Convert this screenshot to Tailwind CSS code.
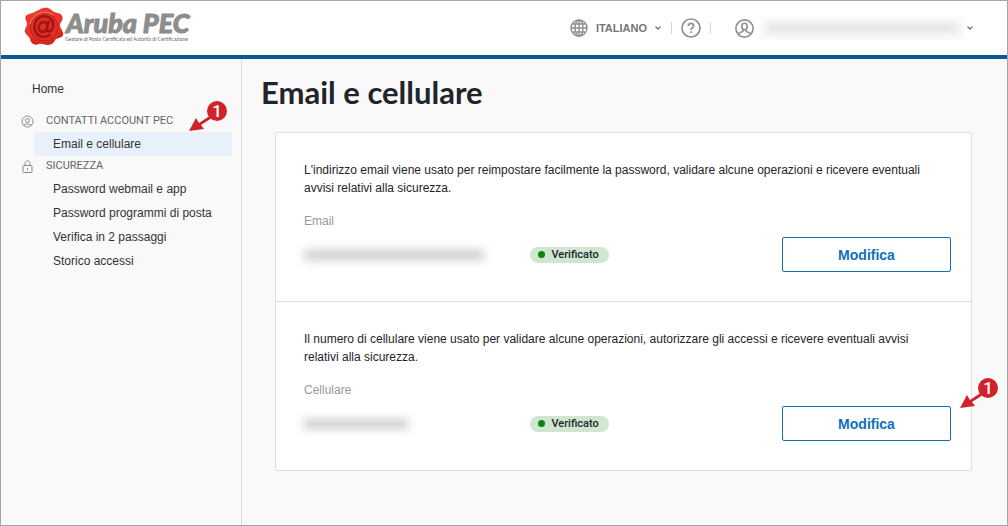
<!DOCTYPE html>
<html lang="it">

<head>
  <meta charset="UTF-8" />
  <meta name="viewport" content="width=device-width, initial-scale=1.0" />
  <title>Email e cellulare - Aruba PEC</title>
  <script src="https://cdn.jsdelivr.net/npm/@tailwindcss/browser@4"></script>
</head>

<body class="flex min-h-screen flex-col border border-[#a6a6a6] bg-[#f9f9f9] font-['Liberation_Sans',Arial,sans-serif] text-[12px] text-[#212529]">

  <!-- Intestazione -->
  <header class="flex h-[58px] shrink-0 items-center justify-between border-b-4 border-[#075a98] bg-white pr-[34px] pl-[22px]">
    <a href="#" aria-label="Aruba PEC" class="block">
      <svg width="200" height="42" viewBox="0 0 200 42" role="img" aria-label="Aruba PEC">
        <defs>
          <radialGradient id="wax" cx="45%" cy="38%" r="65%">
            <stop offset="0" stop-color="#f4493a" />
            <stop offset="0.7" stop-color="#e9352b" />
            <stop offset="1" stop-color="#cb1f18" />
          </radialGradient>
        </defs>
        <path d="M13 4C16 4 17 1 21 1C26 0 28 3 31 5C34 6 38 6 39 9C41 13 37 15 37 18C37 22 41 24 40 28C39 31 35 31 33 32C31 35 29 38 25 38C22 38 19 36 16 37C11 39 8 36 7 32C6 29 3 28 2 25C1 22 4 20 4 17C4 14 1 12 3 9C5 6 10 7 13 4Z" fill="url(#wax)" />
        <circle cx="21" cy="20" r="14" fill="#df2e26" stroke="#bd1e18" />
        <path d="M7 17A15 15 0 0 1 30 8" fill="none" stroke="#fa8578" />
        <g fill="none" stroke="#a01512" stroke-width="2.500" stroke-linecap="round">
          <ellipse cx="20" cy="20" rx="4.200" ry="5" transform="rotate(18 20 20)" />
          <path d="M25.500 14.500L24 22C23.700 25 27 25.500 29 22.500C31 19 30.500 14.500 28 12C24 8 17.500 8.500 14 12.500C10.500 16.500 10.500 23 14 27C17.500 30.500 22.500 30.500 26.500 28" />
        </g>
        <text x="43" y="26" font-family="Lato, sans-serif" font-size="27" font-weight="900" font-style="italic" fill="#8d8d8d" stroke="#8d8d8d" stroke-width="1">Aruba PEC</text>
        <text x="42" y="34" font-family="Lato, sans-serif" font-size="5" fill="#666666">Gestore di Posta Certificata ed Autorità di Certificazione</text>
      </svg>
    </a>

    <div class="flex items-center text-[#757575]">
      <button type="button" class="flex items-center gap-2 text-[11px] font-bold">
        <svg width="18" height="18" viewBox="0 0 18 18" fill="none" stroke="#8f8f8f" stroke-width="1.400">
          <circle cx="9" cy="9" r="8" />
          <ellipse cx="9" cy="9" rx="4" ry="8" />
          <path d="M9 1v16M1 9h16M2.500 5h13M2.500 13h13" />
        </svg>
        ITALIANO
        <svg width="6" height="4" viewBox="0 0 6 4" fill="none" stroke="#757575" stroke-width="1.300"><path d="M0.500 0.500L3 3L5.500 0.500" /></svg>
      </button>
      <span class="ml-2.5 h-3 w-px bg-[#d4d4d4]"></span>
      <button type="button" aria-label="Aiuto" class="mx-[9px]">
        <svg class="block" width="20" height="20" viewBox="0 0 20 20" fill="none" stroke="#8f8f8f" stroke-width="1.700">
          <circle cx="10" cy="10" r="9" />
          <path d="M7.300 8C7.300 4.500 12.700 4.600 12.700 7.800C12.700 9.800 10 9.800 10 12" />
          <path d="M10 13.300v1.700" />
        </svg>
      </button>
      <span class="h-3 w-px bg-[#d4d4d4]"></span>
      <button type="button" aria-label="Account" class="ml-6 flex items-center">
        <svg width="19" height="19" viewBox="0 0 19 19" fill="none" stroke="#8f8f8f" stroke-width="1.600">
          <circle cx="9.500" cy="9.500" r="8.600" />
          <ellipse cx="9.500" cy="7.500" rx="2.700" ry="3.200" />
          <path d="M3.500 15C5 12.500 7.500 13.500 8 12V10.500M11 10.500V12C11.500 13.500 14 12.500 15.500 15" />
        </svg>
        <span class="mr-[3px] ml-1.5 flex h-[23px] w-[204px] items-center bg-[#fbfbfb] px-1.5">
          <span class="h-2 w-full bg-[#dedede] blur-[4px]"></span>
        </span>
        <svg width="6" height="4" viewBox="0 0 6 4" fill="none" stroke="#757575" stroke-width="1.300"><path d="M0.500 0.500L3 3L5.500 0.500" /></svg>
      </button>
    </div>
  </header>

  <div class="flex flex-1">
    <!-- Menu -->
    <nav class="w-[241px] shrink-0 border-r border-[#dedede] pt-5 pr-[9px] pl-[20px] text-[#333333]">
      <a href="#" class="mb-[11px] block pl-[11px] leading-[21px]">Home</a>

      <h2 class="flex h-[21px] items-center gap-3 font-['Roboto',sans-serif] text-[11px] text-[#666666]">
        <svg width="13" height="13" viewBox="0 0 13 13" fill="none" stroke="#8a8a8a">
          <circle cx="6.500" cy="6.500" r="5.500" />
          <circle cx="6.500" cy="5.500" r="2" />
          <path d="M2.500 10.500C3.500 8.500 9.500 8.500 10.500 10.500" />
        </svg>
        CONTATTI ACCOUNT PEC
      </h2>
      <ul class="pl-[13px] leading-6">
        <li class="relative">
          <a href="#" class="block rounded-xs bg-[#e8f1f9] pl-[19px]">Email e cellulare</a>
          <svg class="absolute right-1 bottom-6" width="40" height="32" viewBox="0 0 40 32" fill="#d0222a">
            <path d="M1 31L8 18L11 23L26 13L27 16L13 25L16 29Z" />
            <circle cx="29" cy="11" r="10" />
            <text x="29" y="17" text-anchor="middle" font-family="Roboto, sans-serif" font-size="17" font-weight="500" fill="#ffffff">1</text>
          </svg>
        </li>
      </ul>

      <h2 class="flex h-[21px] items-center gap-3 font-['Roboto',sans-serif] text-[11px] text-[#666666]">
        <svg width="13" height="13" viewBox="0 0 13 13" fill="none" stroke="#8a8a8a">
          <rect x="2" y="5.500" width="9" height="7" rx="1" />
          <path d="M4 5.500V3.500C4 0 9 0 9 3.500V5.500M6.500 8v2.500" />
        </svg>
        SICUREZZA
      </h2>
      <ul class="pl-[32px] leading-6">
        <li><a href="#">Password webmail e app</a></li>
        <li><a href="#">Password programmi di posta</a></li>
        <li><a href="#">Verifica in 2 passaggi</a></li>
        <li><a href="#">Storico accessi</a></li>
      </ul>
    </nav>

    <!-- Contenuto -->
    <main class="min-w-0 flex-1 pt-3 pr-[35px] pl-[19px]">
      <h1 class="font-['Lato',sans-serif] text-[31px] leading-[42px] font-bold">Email e cellulare</h1>

      <div class="mt-[19px] ml-3.5 divide-y divide-[#dedede] rounded-xs border border-[#dedede] bg-white leading-[18px]">
        <section class="pt-7 pr-5 pb-[29px] pl-7">
          <p class="pr-4">L'indirizzo email viene usato per reimpostare facilmente la password, validare alcune operazioni e ricevere eventuali avvisi relativi alla sicurezza.</p>
          <h2 class="mt-[15px] mb-[7px] text-[#999999]">Email</h2>
          <div class="grid grid-cols-[35%_1fr_169px] items-center">
            <span class="h-2.5 w-[180px] bg-[#cccccc] blur-[5px]"></span>
            <span class="flex h-4 items-center gap-1.5 justify-self-start rounded-full bg-[#cfe7d0] pr-2.5 pl-2 text-[11px]"><i class="size-[7px] rounded-full bg-[#0b8413]"></i><b class="font-['Roboto',sans-serif] font-medium">Verificato</b></span>
            <button type="button" class="h-[35px] rounded-xs border border-[#1170bb] text-[14px] font-bold text-[#1170bb]">Modifica</button>
          </div>
        </section>

        <section class="pt-7 pr-5 pb-[29px] pl-7">
          <p class="pr-4">Il numero di cellulare viene usato per validare alcune operazioni, autorizzare gli accessi e ricevere eventuali avvisi relativi alla sicurezza.</p>
          <h2 class="mt-[15px] mb-[7px] text-[#999999]">Cellulare</h2>
          <div class="relative grid grid-cols-[35%_1fr_169px] items-center">
            <span class="h-2.5 w-[104px] bg-[#cccccc] blur-[5px]"></span>
            <span class="flex h-4 items-center gap-1.5 justify-self-start rounded-full bg-[#cfe7d0] pr-2.5 pl-2 text-[11px]"><i class="size-[7px] rounded-full bg-[#0b8413]"></i><b class="font-['Roboto',sans-serif] font-medium">Verificato</b></span>
            <button type="button" class="h-[35px] rounded-xs border border-[#1170bb] text-[14px] font-bold text-[#1170bb]">Modifica</button>
            <svg class="absolute -right-12 bottom-8" width="40" height="32" viewBox="0 0 40 32" fill="#d0222a">
              <path d="M1 31L8 18L11 23L26 13L27 16L13 25L16 29Z" />
              <circle cx="29" cy="11" r="10" />
              <text x="29" y="17" text-anchor="middle" font-family="Roboto, sans-serif" font-size="17" font-weight="500" fill="#ffffff">1</text>
            </svg>
          </div>
        </section>
      </div>
    </main>
  </div>
</body>

</html>
